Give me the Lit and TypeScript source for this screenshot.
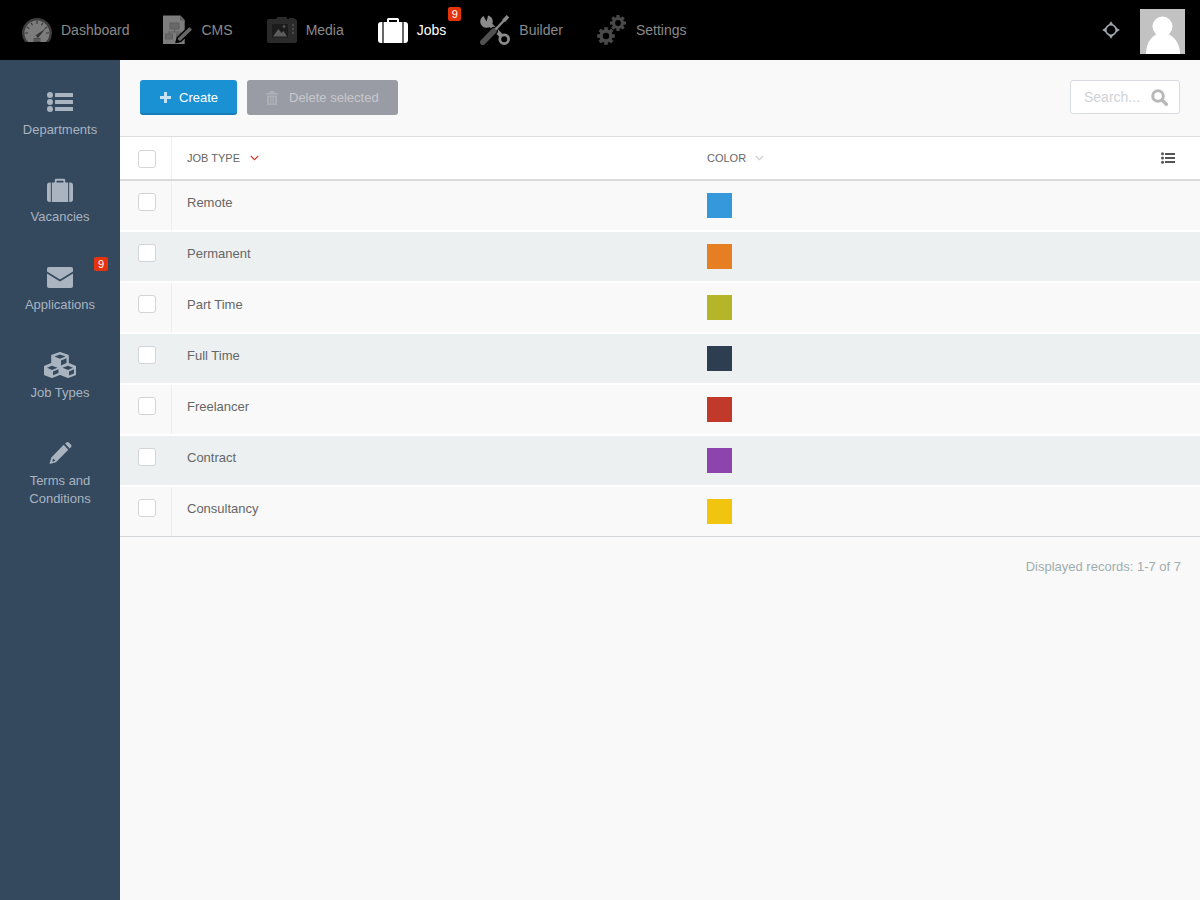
import { LitElement, html, css, svg } from "lit";
import { customElement } from "lit/decorators.js";

const briefcase = svg`<path d="M3 7H4.400V28H3a3 3 0 0 1-3-3V10a3 3 0 0 1 3-3ZM5.600 7H9V4.500A1.500 1.500 0 0 1 10.500 3H19.500A1.500 1.500 0 0 1 21 4.500V7H24.400V28H5.600ZM11 7H19V5H11ZM25.600 7H27a3 3 0 0 1 3 3V25a3 3 0 0 1-3 3H25.600Z" fill-rule="evenodd"/>`;
const gear = (cx: number, cy: number, r: number) => {
  const teeth = [0, 45, 90, 135].map(
    (a) => svg`<rect x=${cx - r * 0.2} y=${cy - r} width=${r * 0.4} height=${r * 2} transform="rotate(${a} ${cx} ${cy})"/>`
  );
  return svg`${teeth}<circle cx=${cx} cy=${cy} r=${r * 0.76}/><circle cx=${cx} cy=${cy} r=${r * 0.36} fill="#000"/>`;
};

const topIcons: Record<string, unknown> = {
  Dashboard: html`<svg viewBox="0 0 30 30"><path d="M3 27A15 15 0 1 1 27 27Z" fill="#3e3e3e"/><path d="M6.300 27A12.500 12.500 0 1 1 23.700 27Z" fill="#7c7c7c"/><path d="M15 6V9M9 7.800L10.500 10.300M4.800 12L7.300 13.500M3 18H6M21 7.800L19.500 10.300M25.200 12L22.700 13.500M27 18H24" stroke="#3a3a3a" stroke-width="1.200" fill="none"/><path d="M13.500 20.500L23.500 13.500 16 23Z" fill="#333"/><rect x="11.500" y="23" width="7" height="4" fill="#4c4c4c"/><path d="M11.500 25H18.500" stroke="#777" stroke-width=".7"/></svg>`,
  CMS: html`<svg viewBox="0 0 30 30"><path d="M0 .6H17.500L21.700 5V29H0Z" fill="#7d7d7d"/><path d="M17 .6V5.500H21.700Z" fill="#5f5f5f"/><path d="M11.500 14V17M6 21V17H17V21" fill="none" stroke="#5f5f5f" stroke-width="1.200"/><rect x="7" y="8" width="9" height="6" fill="#686868" stroke="#5f5f5f"/><rect x="2.500" y="19" width="7" height="5" fill="#686868" stroke="#5f5f5f"/><rect x="13.500" y="19" width="7" height="5" fill="#686868" stroke="#5f5f5f"/><path d="M13 27.500L14.500 22.500 26.500 11 30 14.700 18 26.200Z" fill="#666" stroke="#000" stroke-width="1.500" stroke-linejoin="round"/><path d="M13 27.500L14.500 24 16.500 26Z" fill="#000"/></svg>`,
  Media: html`<svg viewBox="0 0 30 30"><path d="M2 4H9L10.500 2H19.500L20.500 4H22V3H27V4H28a2 2 0 0 1 2 2V26a2 2 0 0 1-2 2H2a2 2 0 0 1-2-2V6a2 2 0 0 1 2-2Z" fill="#2b2b2b"/><rect x="5" y="9" width="16" height="13.500" fill="#1c1c1c"/><path d="M6 21.500L11.500 14 14.500 18 16.500 16 20 21.500Z" fill="#5c5c5c"/><circle cx="17" cy="11.500" r="1.300" fill="#5c5c5c"/><circle cx="26" cy="10" r="1.200" fill="#4a4a4a"/><circle cx="26" cy="14" r="1.200" fill="#4a4a4a"/><circle cx="26" cy="18" r="1.200" fill="#4a4a4a"/></svg>`,
  Jobs: html`<svg viewBox="0 0 30 30" fill="#fff">${briefcase}</svg>`,
  Builder: html`<svg viewBox="0 0 30 30"><circle cx="6.500" cy="6.500" r="6.300" fill="#8b8b8b"/><path d="M6.500 6.500L2.500-1H8.500Z" fill="#000"/><path d="M10 9.500L23 22.500" stroke="#8b8b8b" stroke-width="4.400" fill="none"/><circle cx="24.200" cy="24.200" r="4.400" fill="#000" stroke="#8b8b8b" stroke-width="2.800"/><path d="M2.800 27.200L13.800 16" stroke="#000" stroke-width="8" stroke-linecap="round"/><path d="M2.800 27.200L13.800 16" stroke="#505050" stroke-width="5.600" stroke-linecap="round"/><path d="M15.500 14.500L24 5.500" stroke="#8b8b8b" stroke-width="2.400"/><path d="M23.500 6L28 1.300" stroke="#8b8b8b" stroke-width="3.600"/></svg>`,
  Settings: html`<svg viewBox="0 0 30 30" fill="#4a4a4a">${gear(9, 21, 8.800)}${gear(21, 8, 8)}</svg>`,
};

const sideIcons: Record<string, unknown> = {
  Departments: html`<svg viewBox="0 -2 26 22"><circle cx="3" cy="3" r="3"/><circle cx="3" cy="10" r="3"/><circle cx="3" cy="17" r="3"/><rect x="8" y="1" width="18" height="4" rx=".5"/><rect x="8" y="8" width="18" height="4" rx=".5"/><rect x="8" y="15" width="18" height="4" rx=".5"/></svg>`,
  Vacancies: html`<svg viewBox="0 1 30 27" preserveAspectRatio="none">${briefcase}</svg>`,
  Applications: html`<svg viewBox="0 -1 26 22"><path d="M2 0H24a2 2 0 0 1 2 2V4.500L13 12.500 0 4.500V2a2 2 0 0 1 2-2Z"/><path d="M0 6.500L13 14.500 26 6.500V19a2 2 0 0 1-2 2H2a2 2 0 0 1-2-2Z"/></svg>`,
  "Job Types": html`<svg viewBox="0 0 32 26"><path d="M16 .8L24 3.500V11.500L31.200 14.500V22.500L24 25.200 16 22 8 25.200 .8 22.500V14.500L8 11.500V3.500Z" stroke="#a9b4c0" stroke-width="1.600" stroke-linejoin="round"/><path d="M10.500 4.500L16 2.500 21.500 4.500 16 6.800ZM3 15.800L8 13.800 13.500 15.800 8 18ZM18.500 15.800L24 13.800 29 15.800 24 18Z" fill="#34495e"/><path d="M17 8.500L22.500 6.300V11L17 13.500ZM9 19.500L14.500 17.300V21L9 23.200ZM25 19.500L30 17.300V21.500L25 23.500Z" fill="#34495e"/></svg>`,
  "Terms and Conditions": html`<svg viewBox="0 0 24 24"><path d="M17 1.500L18.500 .5a2 2 0 0 1 2.500 0L23.500 3a2 2 0 0 1 0 2.500L22 7ZM15.500 3L20.500 8.500 7 22 0 24 2 17ZM4 18L3 21.500 6.500 20.500Z" fill-rule="evenodd"/></svg>`,
};

const rows = [
  ["Remote", "#3498db"],
  ["Permanent", "#e67e22"],
  ["Part Time", "#b5b52a"],
  ["Full Time", "#2c3e50"],
  ["Freelancer", "#c0392b"],
  ["Contract", "#8e44ad"],
  ["Consultancy", "#f1c40f"],
];

const chevron = html`<svg class="chev" viewBox="0 0 9 6"><path d="M.8 1L4.500 4.700 8.200 1" fill="none" stroke="currentColor" stroke-width="1.100"/></svg>`;

@customElement("app-root")
export class AppRoot extends LitElement {
  static styles = css`
    :host { display: block; height: 900px; background: #f9f9f9; font-family: "Liberation Sans", Arial, sans-serif; overflow: hidden; }
    * { box-sizing: border-box; }
    .top { height: 60px; background: #000; display: flex; align-items: center; padding: 0 15px 0 5px; }
    .nav { display: flex; flex: 1; height: 100%; }
    .nav-item { position: relative; display: flex; align-items: center; gap: 9px; padding: 0 17px; color: #8a8a8a; font-size: 14px; }
    .nav-item:first-child { padding-right: 16px; }
    .nav-item svg { width: 30px; height: 30px; flex: none; display: block; }
    .nav-item.active { color: #fff; }
    .badge { position: absolute; background: #e5340b; color: #fff; font-size: 11px; line-height: 14px; height: 14px; width: 13px; text-align: center; border-radius: 2px; }
    .nav-item .badge { top: 7px; right: 2px; }
    .locate { width: 18px; height: 18px; margin-right: 20px; color: #a0a6aa; display: block; }
    .avatar { width: 45px; height: 45px; display: block; margin-top: 3px; }
    .body { display: flex; height: 840px; }
    .side { width: 120px; flex: none; background: #34495e; color: #a9b4c0; padding-top: 18px; }
    .side-item { position: relative; display: flex; flex-direction: column; align-items: center; height: 88px; font-size: 13px; line-height: 18px; text-align: center; padding: 0 20px; }
    .side-item:first-child .label { padding-top: 1px; }
    .side-ico { height: 26px; display: flex; align-items: center; justify-content: center; margin-bottom: 6px; margin-top: 10px; }
    .side-ico span { display: block; }
    .side-ico svg { display: block; width: 100%; height: 100%; fill: #a9b4c0; }
    .side-item .badge { top: 3px; right: 12px; width: 14px; }
    .main { flex: 1; min-width: 0; }
    .toolbar { height: 76px; display: flex; align-items: center; justify-content: space-between; padding: 0 20px; }
    .btns { display: flex; gap: 10px; margin-top: -1px; }
    .btn { height: 35px; display: flex; align-items: center; border-radius: 3px; font-size: 13px; }
    .create { width: 97px; background: #1a91d3; border-bottom: 2px solid #167cb5; color: #fff; padding: 2px 0 0 20px; gap: 8px; }
    .create svg { width: 11px; height: 11px; fill: #c8e2f2; }
    .delete { width: 151px; background: #9a9ca5; color: #c6c8cd; padding-left: 19px; gap: 11px; }
    .delete svg { width: 12px; height: 14px; fill: #adafb6; }
    .search { width: 110px; height: 34px; background: #fff; border: 1px solid #d8dbdf; border-radius: 3px; display: flex; align-items: center; justify-content: space-between; padding: 0 11px 0 13px; color: #cfd2d6; font-size: 14px; margin-top: -2px; }
    .search svg { width: 17px; height: 17px; }
    .thead { display: flex; align-items: stretch; height: 45px; background: #fff; border-top: 1px solid #dedede; border-bottom: 2px solid #d8dadc; }
    .row { display: flex; height: 51px; border-bottom: 2px solid #fff; background: #f9f9f9; }
    .row.alt { background: #ecf0f1; }
    .row.last { height: 50px; border-bottom: 1px solid #d5d8da; }
    .check { width: 52px; flex: none; border-right: 1px solid #eceeef; display: flex; justify-content: center; padding: 12px 0 0 3px; }
    .thead .check { padding-top: 13px; }
    .box { width: 18px; height: 18px; background: #fff; border: 1px solid #d2d5d8; border-radius: 3px; }
    .name { width: 535px; flex: none; padding: 14px 0 0 15px; font-size: 13px; line-height: 15px; color: #666; }
    .color { flex: 1; padding-top: 12px; }
    .swatch { width: 25px; height: 25px; }
    .th { display: flex; align-items: center; gap: 10px; font-size: 11px; color: #666; width: 535px; flex: none; padding-left: 15px; }
    .th.c { flex: 1; width: auto; padding-left: 0; gap: 9px; }
    .chev { width: 9px; height: 6px; display: block; margin-top: -1px; }
    .chev-red { color: #d9362b; }
    .chev-grey { color: #c9cdd1; }
    .cols { width: 14px; height: 12px; margin-right: 25px; fill: #555; align-self: center; }
    .foot { text-align: right; padding: 22px 19px 0 0; font-size: 13px; line-height: 15px; color: #9fadae; }
  `;

  render() {
    const navs = ["Dashboard", "CMS", "Media", "Jobs", "Builder", "Settings"];
    const sides: [string, number, number][] = [
      ["Departments", 26, 22],
      ["Vacancies", 26, 25],
      ["Applications", 26, 22],
      ["Job Types", 32, 26],
      ["Terms and Conditions", 23, 22],
    ];
    return html`
      <header class="top">
        <nav class="nav">
          ${navs.map(
            (n) => html`<div class="nav-item ${n === "Jobs" ? "active" : ""}">
              ${topIcons[n]}<span>${n}</span>
              ${n === "Jobs" ? html`<span class="badge">9</span>` : ""}
            </div>`
          )}
        </nav>
        <svg class="locate" viewBox="0 0 18 18"><circle cx="9" cy="9" r="5.200" fill="none" stroke="currentColor" stroke-width="1.600"/><path d="M9 .2L11.500 4H6.500ZM9 17.800L11.500 14H6.500ZM.2 9L4 6.500V11.500ZM17.800 9L14 6.500V11.500Z" fill="currentColor"/></svg>
        <svg class="avatar" viewBox="0 0 45 45"><rect width="45" height="45" fill="#c2c2c2"/><circle cx="22.500" cy="17.500" r="10" fill="#fff"/><path d="M6 45C6 33 13 24 22.500 24S40 33 40 45Z" fill="#fff"/></svg>
      </header>
      <div class="body">
        <aside class="side">
          ${sides.map(
            ([n, w, h]) => html`<div class="side-item">
              <div class="side-ico"><span style="width:${w}px;height:${h}px">${sideIcons[n]}</span></div>
              <span class="label">${n}</span>
              ${n === "Applications" ? html`<span class="badge">9</span>` : ""}
            </div>`
          )}
        </aside>
        <main class="main">
          <div class="toolbar">
            <div class="btns">
              <div class="btn create"><svg viewBox="0 0 11 11"><path d="M4 0H7V4H11V7H7V11H4V7H0V4H4Z"/></svg>Create</div>
              <div class="btn delete"><svg viewBox="0 0 12 14"><path d="M4 0H8L9 2H12V3.500H0V2H3ZM1 4.500H11V14H1ZM3 6V12.500H4V6ZM5.500 6V12.500H6.500V6ZM8 6V12.500H9V6Z" fill-rule="evenodd"/></svg>Delete selected</div>
            </div>
            <div class="search"><span>Search...</span><svg viewBox="0 0 17 17" fill="none" stroke="#b9b9b9"><circle cx="7" cy="7" r="5.300" stroke-width="3"/><path d="M11 11L15.300 15.300" stroke-width="3.400" stroke-linecap="round"/></svg></div>
          </div>
          <div class="thead">
            <div class="check"><div class="box"></div></div>
            <div class="th"><span>JOB TYPE</span><span class="chev-red">${chevron}</span></div>
            <div class="th c"><span>COLOR</span><span class="chev-grey">${chevron}</span></div>
            <svg class="cols" viewBox="0 0 14 12"><circle cx="1.500" cy="1.800" r="1.500"/><circle cx="1.500" cy="6" r="1.500"/><circle cx="1.500" cy="10.200" r="1.500"/><rect x="4" y="1" width="10" height="2"/><rect x="4" y="5" width="10" height="2"/><rect x="4" y="9" width="10" height="2"/></svg>
          </div>
          ${rows.map(
            ([n, c], i) => html`<div class="row ${i % 2 ? "alt" : ""} ${i === rows.length - 1 ? "last" : ""}">
              <div class="check"><div class="box"></div></div>
              <div class="name">${n}</div>
              <div class="color"><div class="swatch" style="background:${c}"></div></div>
            </div>`
          )}
          <div class="foot">Displayed records: 1-7 of 7</div>
        </main>
      </div>
    `;
  }
}
